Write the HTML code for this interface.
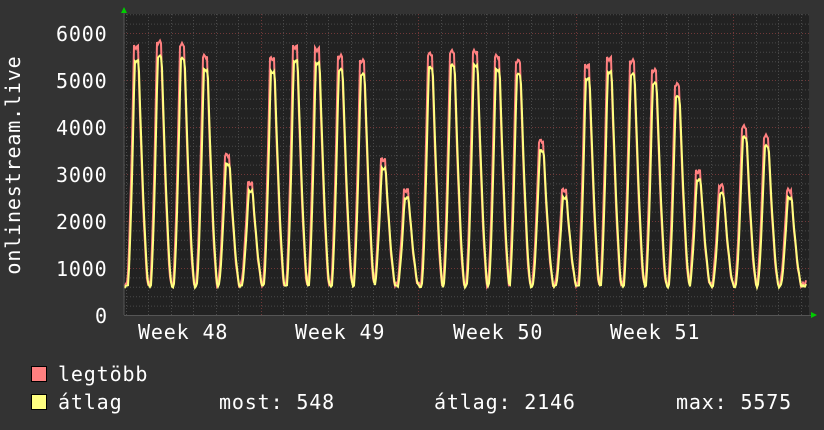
<!DOCTYPE html>
<html><head><meta charset="utf-8"><style>
body{margin:0;background:#333;width:824px;height:430px;overflow:hidden;font-family:"DejaVu Sans Mono","Liberation Mono",monospace;color:#fff}
.t{position:absolute;font-size:20px;letter-spacing:0.85px;white-space:pre;line-height:1}
.sw{position:absolute;width:14px;height:14px;border:1px solid #000}
</style></head><body>
<svg id="g" width="824" height="430" style="position:absolute;left:0;top:0"></svg>
<div class="t" style="left:56px;top:24px">6000</div>
<div class="t" style="left:56px;top:71px">5000</div>
<div class="t" style="left:56px;top:118px">4000</div>
<div class="t" style="left:56px;top:165px">3000</div>
<div class="t" style="left:56px;top:212px">2000</div>
<div class="t" style="left:56px;top:259px">1000</div>
<div class="t" style="left:95px;top:306px">0</div>
<div class="t" style="left:138px;top:322px">Week 48</div>
<div class="t" style="left:295px;top:322px">Week 49</div>
<div class="t" style="left:453px;top:322px">Week 50</div>
<div class="t" style="left:610px;top:322px">Week 51</div>
<div class="t" style="left:-97px;top:155px;transform:rotate(-90deg);width:220px;text-align:center">onlinestream.live</div>
<div class="sw" style="left:31px;top:366px;background:#ff8080"></div>
<div class="sw" style="left:31px;top:394px;background:#ffff80"></div>
<div class="t" style="left:58px;top:364px">legtöbb</div>
<div class="t" style="left:58px;top:392px">átlag</div>
<div class="t" style="left:219px;top:392px">most: 548</div>
<div class="t" style="left:434px;top:392px">átlag: 2146</div>
<div class="t" style="left:676px;top:392px">max: 5575</div>
<script>
var s='';
var X0=124,X1=809,Y0=315,YT=14,k=0.047;
s+='<rect x="'+X0+'" y="'+YT+'" width="'+(X1-X0)+'" height="'+(Y0-YT)+'" fill="#222"/>';
for(var v=200;v<=6400;v+=200){var y=Y0-v*k;if(y<YT)break;var maj=v%1000==0;
s+='<line x1="'+X0+'" x2="'+X1+'" y1="'+(y+.5)+'" y2="'+(y+.5)+'" stroke="'+(maj?'#703838':'#4a4a4a')+'" stroke-dasharray="1,2"/>';}
for(var i=-30;i<40;i++){var x=733-22.5*i;if(x<=X0||x>=X1)continue;var maj=(i%7==0);
s+='<line x1="'+(Math.round(x)+.5)+'" x2="'+(Math.round(x)+.5)+'" y1="'+YT+'" y2="'+Y0+'" stroke="'+(maj?'#703838':'#4a4a4a')+'" stroke-dasharray="1,2"/>';}
var px=[136,159,182,205,227,250,272,295,317,340,362,383,406,430,452,475,497,518,541,564,587,609,632,654,677,698,721,744,766,789,812];
var pv=[5700,5800,5750,5500,3400,2800,5450,5700,5650,5500,5400,3300,2650,5550,5600,5600,5500,5400,3700,2650,5300,5450,5400,5200,4900,3050,2750,4000,3800,2650,900];
function f(x,a){var r=650;for(var j=0;j<px.length;j++){var d=x-px[j];var dd=Math.max(0,Math.abs(d)-2);var W=d<0?7:10;var q=1-dd/W;if(q<=0)continue;var b=Math.pow(q,1.5);r=Math.max(r,650+(pv[j]*a-650)*b);}return r;}
var pr='',py='';
for(var x=X0;x<=X1-3;x+=1){var n=Math.sin(x*1.7)*40;pr+=(x==X0?'M':'L')+x+','+(Y0-(f(x,1)+n)*k).toFixed(1);py+=(x==X0?'M':'L')+x+','+(Y0-(f(x-0.7,0.955)-40+n*.6)*k).toFixed(1);}
s+='<path d="'+pr+'" fill="none" stroke="#ff8080" stroke-width="2"/>';
s+='<path d="'+py+'" fill="none" stroke="#ffff80" stroke-width="2"/>';
s+='<line x1="'+X0+'" x2="'+X0+'" y1="12" y2="'+Y0+'" stroke="#555"/>';
s+='<line x1="'+X0+'" x2="814" y1="'+(Y0+.5)+'" y2="'+(Y0+.5)+'" stroke="#555"/>';
s+='<polygon points="121,13 127,13 124,7" fill="#0c0"/>';
s+='<polygon points="811,312 811,318 817,315" fill="#0c0"/>';
document.getElementById('g').innerHTML=s;
</script>
</body></html>
